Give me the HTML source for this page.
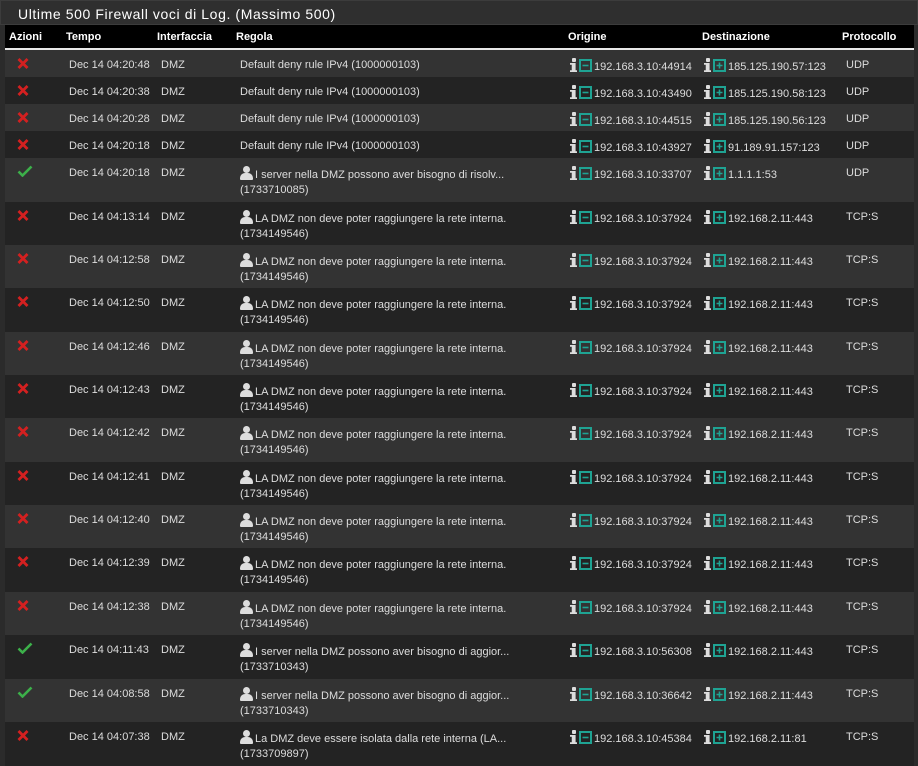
<!DOCTYPE html><html><head><meta charset="utf-8"><style>
*{margin:0;padding:0;box-sizing:border-box}
body{width:918px;height:761px;overflow:hidden;background:#2b2b2b;font-family:"Liberation Sans",sans-serif;color:#ddd;font-size:11px;position:relative}
.title{position:absolute;left:0;top:0;width:918px;height:25px;background:#2f2f2f;border:1px solid #3c3c3c;color:#fff;font-size:14px;letter-spacing:0.6px;padding:5px 0 0 17px}
.tbl{position:absolute;left:5px;top:25px;width:909px}
.hd{height:25px;background:#000;border-bottom:2px solid #e8e8e8;position:relative;font-weight:bold;color:#fff}
.hd span{position:absolute;top:6px}
.r{position:relative;height:27px}
.o{background:#333}.e{background:#232323}
.r>span{position:absolute;top:8px;white-space:nowrap;line-height:15px}
.x{left:12px;top:8px!important}
.ck{left:12px;top:7px!important}
.info{display:inline-block;vertical-align:-2px;width:7px;height:14px;position:relative;margin-right:2px}
.info:before{content:"";position:absolute;left:2px;top:0;width:4px;height:4px;background:#ddd;border-radius:1px}
.info:after{content:"";position:absolute;left:0;top:5px;width:7px;height:9px;background:#ddd;clip-path:polygon(0 0,80% 0,80% 80%,100% 80%,100% 100%,0 100%,0 80%,25% 80%,25% 20%,0 20%)}
svg.b{vertical-align:-2px;margin-right:2px}
.u{display:inline-block;width:12px;height:14px;position:relative;vertical-align:-2px;margin-right:3px}
.u:before{content:"";position:absolute;left:3px;top:0;width:7px;height:7px;border-radius:50%;background:#ddd}
.u:after{content:"";position:absolute;left:0;top:7px;width:13px;height:7px;border-radius:5px 5px 1px 1px;background:#ddd}
.c1{left:64px}.c2{left:156px}.c3{left:235px}.c4{left:565px}.c5{left:699px}.c6{left:841px}
</style></head><body>
<div class="title">Ultime 500 Firewall voci di Log. (Massimo 500)</div>
<div class="tbl">
<div class="hd"><span style="left:4px">Azioni</span><span style="left:61px">Tempo</span><span style="left:152px">Interfaccia</span><span style="left:231px">Regola</span><span style="left:563px">Origine</span><span style="left:697px">Destinazione</span><span style="left:837px">Protocollo</span></div>
<div id="rows"></div>
</div>
<script>
var R=[
["x","04:20:48","Default deny rule IPv4 (1000000103)","",44914,"185.125.190.57:123","UDP"],
["x","04:20:38","Default deny rule IPv4 (1000000103)","",43490,"185.125.190.58:123","UDP"],
["x","04:20:28","Default deny rule IPv4 (1000000103)","",44515,"185.125.190.56:123","UDP"],
["x","04:20:18","Default deny rule IPv4 (1000000103)","",43927,"91.189.91.157:123","UDP"],
["c","04:20:18","I server nella DMZ possono aver bisogno di risolv...","(1733710085)",33707,"1.1.1.1:53","UDP"],
["x","04:13:14","L","",37924,"192.168.2.11:443","TCP:S"],
["x","04:12:58","L","",37924,"192.168.2.11:443","TCP:S"],
["x","04:12:50","L","",37924,"192.168.2.11:443","TCP:S"],
["x","04:12:46","L","",37924,"192.168.2.11:443","TCP:S"],
["x","04:12:43","L","",37924,"192.168.2.11:443","TCP:S"],
["x","04:12:42","L","",37924,"192.168.2.11:443","TCP:S"],
["x","04:12:41","L","",37924,"192.168.2.11:443","TCP:S"],
["x","04:12:40","L","",37924,"192.168.2.11:443","TCP:S"],
["x","04:12:39","L","",37924,"192.168.2.11:443","TCP:S"],
["x","04:12:38","L","",37924,"192.168.2.11:443","TCP:S"],
["c","04:11:43","I server nella DMZ possono aver bisogno di aggior...","(1733710343)",56308,"192.168.2.11:443","TCP:S"],
["c","04:08:58","I server nella DMZ possono aver bisogno di aggior...","(1733710343)",36642,"192.168.2.11:443","TCP:S"],
["x","04:07:38","La DMZ deve essere isolata dalla rete interna (LA...","(1733709897)",45384,"192.168.2.11:81","TCP:S"]];
var H=[27,27,27,27,44,43,43,44,43,43,44,43,43,44,43,44,43,44];
var minus='<svg class="b" width="13" height="13" viewBox="0 0 13 13"><rect x="1" y="1" width="11" height="11" fill="none" stroke="#1fa393" stroke-width="2"/><path d="M3.5 6.5h6" stroke="#1fa393" stroke-width="1.6"/></svg>';
var plus='<svg class="b" width="13" height="13" viewBox="0 0 13 13"><rect x="1" y="1" width="11" height="11" fill="none" stroke="#1fa393" stroke-width="2"/><path d="M3.5 6.5h6M6.5 3.5v6" stroke="#1fa393" stroke-width="1.6"/></svg>';
var h="";R.forEach(function(r,i){var rule=r[2],sub=r[3];if(rule=="L"){rule="LA DMZ non deve poter raggiungere la rete interna.";sub="(1734149546)";}
var d=i>=4;var icon=r[0]=="x"?'<span class="x"><svg width="12" height="11" viewBox="0 0 12 11"><path d="M1.5 1l9 9M10.5 1l-9 9" stroke="#d42020" stroke-width="2.8"/></svg></span>':'<span class="ck"><svg width="16" height="12" viewBox="0 0 16 12"><path d="M1.5 6.5l4 4 9-9" stroke="#3cb04a" stroke-width="2.6" fill="none"/></svg></span>';
h+='<div class="r '+(i%2?'e':'o')+'" style="height:'+H[i]+'px">'+icon+'<span class="c1">Dec 14 '+r[1]+'</span><span class="c2">DMZ</span><span class="c3">'+(d?'<i class="u"></i>':'')+rule+(sub?'<br>'+sub:'')+'</span><span class="c4"><i class="info"></i>'+minus+'192.168.3.10:'+r[4]+'</span><span class="c5"><i class="info"></i>'+plus+r[5]+'</span><span class="c6">'+r[6]+'</span></div>';});
document.getElementById("rows").innerHTML=h;
</script>
</body></html>
